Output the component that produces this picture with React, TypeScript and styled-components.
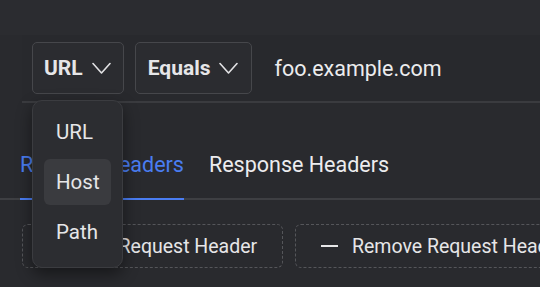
import styled, { createGlobalStyle } from 'styled-components'

const GlobalStyle = createGlobalStyle`
    html, body {
        margin: 0;
        background: #292a2e;
    }
    body {
        font-family: Roboto, "Noto Sans", sans-serif;
        color: #e8e8ea;
    }
`

const Chevron = () => (
    <svg width="19" height="13" viewBox="0 0 19 13" fill="none">
        <polyline points="1,1.5 9.5,11 18,1.5" stroke="#e2e2e4" strokeWidth="1.6" strokeLinejoin="round" strokeLinecap="round" />
    </svg>
)

const menuItems = ['URL', 'Host', 'Path']

const App = () => {
    return (
        <>
            <GlobalStyle />
            <Page>
                <TopBand />
                <FilterRow>
                    <SelectWrap>
                        <SelectButton>
                            URL <Chevron />
                        </SelectButton>
                        <Menu>
                            {menuItems.map((item) => (
                                <MenuItem key={item} active={item === 'Host'}>
                                    {item}
                                </MenuItem>
                            ))}
                        </Menu>
                    </SelectWrap>
                    <SelectButton wide>
                        Equals <Chevron />
                    </SelectButton>
                    <ValueText>foo.example.com</ValueText>
                </FilterRow>
                <Tabs>
                    <Tab active>Request Headers</Tab>
                    <Tab>Response Headers</Tab>
                </Tabs>
                <Actions>
                    <DashedButton width={261}>
                        <Plus>+</Plus>
                        Add Request Header
                    </DashedButton>
                    <DashedButton width={280}>
                        <Minus />
                        Remove Request Header
                    </DashedButton>
                </Actions>
            </Page>
        </>
    )
}

export default App

const Page = styled.div`
    width: 540px;
    height: 287px;
    overflow: hidden;
    display: flex;
    flex-direction: column;
`

const TopBand = styled.div`
    flex: none;
    height: 35px;
    background: #2b2c30;
`

const FilterRow = styled.div`
    flex: none;
    margin-left: 22px;
    height: 66px;
    padding-left: 10px;
    display: flex;
    align-items: center;
    gap: 11px;
    background: #28292d;
    border-bottom: 2px solid #3a3b3f;
`

const SelectWrap = styled.div`
    position: relative;
`

const SelectButton = styled.div<{ wide?: boolean }>`
    height: 52px;
    box-sizing: border-box;
    padding: 0 ${(props) => (props.wide ? '13px' : '12px')} 0 ${(props) => (props.wide ? '12px' : '11px')};
    display: flex;
    align-items: center;
    gap: 9px;
    border: 1px solid #46474b;
    border-radius: 5px;
    background: #2b2c30;
    font-size: 21px;
    font-weight: 700;
    color: #e6e6e8;
`

const ValueText = styled.div`
    margin-left: 11px;
    font-size: 21.5px;
    color: #ececee;
`

const Menu = styled.div`
    position: absolute;
    left: 0;
    top: 58px;
    width: 91px;
    height: 168px;
    box-sizing: border-box;
    padding: 8px 11px;
    display: flex;
    flex-direction: column;
    gap: 4px;
    background: #2c2d31;
    border: 1px solid #3b3c40;
    border-radius: 10px;
    box-shadow: 0 6px 16px rgba(0, 0, 0, 0.45);
    z-index: 2;
`

const MenuItem = styled.div<{ active?: boolean }>`
    height: 46px;
    flex: none;
    display: flex;
    align-items: center;
    padding-left: 12px;
    border-radius: 6px;
    font-size: 20.5px;
    color: #e6e6e8;
    background: ${(props) => (props.active ? '#3a3b3f' : 'transparent')};
`

const Tabs = styled.div`
    flex: none;
    height: 97px;
    box-sizing: border-box;
    padding-left: 20px;
    display: flex;
    align-items: flex-end;
    gap: 25px;
    border-bottom: 2px solid #3e3f43;
`

const Tab = styled.div<{ active?: boolean }>`
    height: 100%;
    display: flex;
    align-items: center;
    box-sizing: border-box;
    padding-top: 26px;
    margin-bottom: -2px;
    font-size: 21.5px;
    color: ${(props) => (props.active ? '#4a7df2' : '#ececee')};
    border-bottom: 2px solid ${(props) => (props.active ? '#4a7df2' : 'transparent')};
`

const Actions = styled.div`
    margin-top: 24px;
    padding-left: 22px;
    display: flex;
    gap: 12px;
`

const DashedButton = styled.div<{ width: number }>`
    flex: none;
    width: ${(props) => props.width}px;
    height: 44px;
    box-sizing: border-box;
    padding-left: 25px;
    border: 1px dashed #55565a;
    border-radius: 6px;
    display: flex;
    align-items: center;
    gap: 14px;
    font-size: 19.5px;
    color: #e6e6e8;
    white-space: nowrap;
`

const Plus = styled.span`
    width: 17px;
    text-align: center;
    font-size: 22px;
    font-weight: 300;
`

const Minus = styled.span`
    width: 17px;
    height: 1.5px;
    background: #e6e6e8;
`
